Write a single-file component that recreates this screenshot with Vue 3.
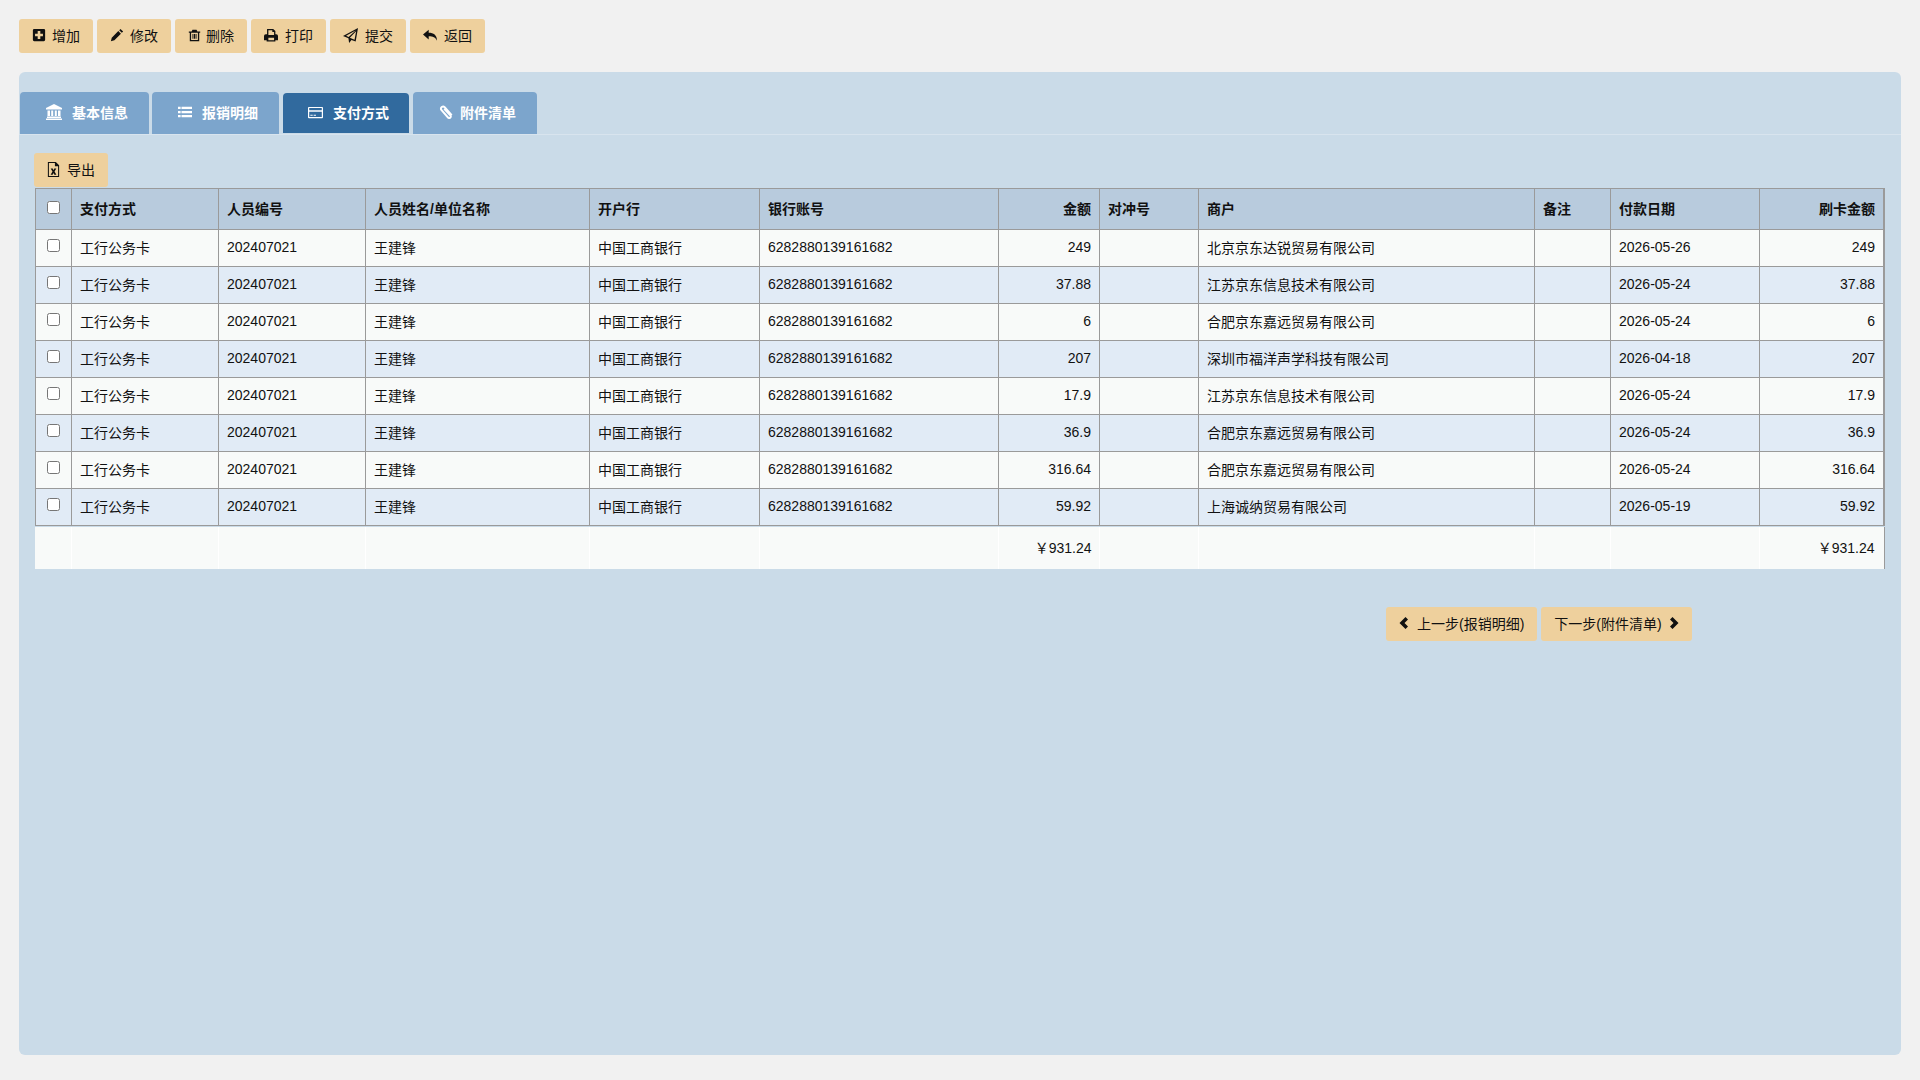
<template>
  <div class="page">
    <div class="toolbar">
      <button v-for="b in tools" :key="b.t" class="btn"><svg class="ic" :style="{ width: b.w + 'px', height: b.w + 'px', marginRight: b.g + 'px' }" viewBox="0 0 16 16" v-html="icons[b.i]"></svg>{{ b.t }}</button>
    </div>
    <div class="panel">
      <div class="tabs">
        <div v-for="t in tabs" :key="t.t" class="tab" :class="{ active: t.a }"><svg class="tic" :style="{ width: t.w + 'px', height: t.w + 'px', marginRight: t.g + 'px' }" viewBox="0 0 16 16" v-html="icons[t.i]"></svg>{{ t.t }}</div>
      </div>
      <div class="content">
        <button class="btn export"><svg class="ic ex" viewBox="0 0 16 16" v-html="icons.excel"></svg>导出</button>
        <div class="grid-wrap">
          <table class="grid">
            <colgroup><col v-for="(w, i) in cols" :key="i" :style="{ width: w + 'px' }" /></colgroup>
            <thead>
              <tr>
                <th class="c"><input type="checkbox" /></th>
                <th>支付方式</th><th>人员编号</th><th>人员姓名/单位名称</th><th>开户行</th><th>银行账号</th>
                <th class="r">金额</th><th>对冲号</th><th>商户</th><th>备注</th><th>付款日期</th><th class="r">刷卡金额</th>
              </tr>
            </thead>
            <tbody>
              <tr v-for="(r, i) in rows" :key="i" :class="{ even: i % 2 }">
                <td class="c"><input type="checkbox" /></td>
                <td>工行公务卡</td><td>202407021</td><td>王建锋</td><td>中国工商银行</td><td>6282880139161682</td>
                <td class="r">{{ r[0] }}</td><td></td><td>{{ r[1] }}</td><td></td><td>{{ r[2] }}</td><td class="r">{{ r[0] }}</td>
              </tr>
            </tbody>
          </table>
        </div>
        <table class="foot">
          <colgroup><col v-for="(w, i) in footCols" :key="i" :style="{ width: w + 'px' }" /></colgroup>
          <tbody>
            <tr><td></td><td></td><td></td><td></td><td></td><td></td><td class="r">￥931.24</td><td></td><td></td><td></td><td></td><td class="r">￥931.24</td></tr>
          </tbody>
        </table>
        <div class="steps">
          <button class="btn"><svg class="chev before" viewBox="0 0 10 14"><path d="M6.500 1L9 3.500 5.500 7 9 10.500 6.500 13 .5 7z" /></svg>上一步(报销明细)</button>
          <button class="btn">下一步(附件清单)<svg class="chev after" viewBox="0 0 10 14"><path d="M3.500 1L1 3.500 4.500 7 1 10.500 3.500 13 9.500 7z" /></svg></button>
        </div>
      </div>
    </div>
  </div>
</template>

<script setup>
const icons = {
  plus: '<path fill-rule="evenodd" d="M2.500 1h11A1.500 1.500 0 0 1 15 2.500v11a1.500 1.500 0 0 1-1.500 1.500h-11A1.500 1.500 0 0 1 1 13.500v-11A1.500 1.500 0 0 1 2.500 1zM6.500 3.500v3h-3v3h3v3h3v-3h3v-3h-3v-3z"/>',
  pencil: '<path d="M12 1l3 3-1.500 1.500-3-3zM9.500 3.500l3 3L5 14l-4 1 1-4z"/>',
  trash: '<path fill-rule="evenodd" d="M5.500 1h5l1 2H15v1.600h-1.200V15H2.200V4.600H1V3h3.500zM3.800 4.600v8.800h8.400V4.600zM5.500 6h1.200v6H5.500zM7.400 6h1.200v6H7.400zM9.300 6h1.200v6H9.300z"/>',
  print: '<path fill-rule="evenodd" d="M3.500 1h7L13 3.500V7h1a2 2 0 0 1 2 2v5h-3v1.500H3V14H0V9a2 2 0 0 1 2-2h1.500zM5 2.500V8h6.500V4.500H9.500v-2zM5 11v3h6.500v-3z"/>',
  send: '<path fill-rule="evenodd" d="M16 0L13.500 14.500 9 12.700 6.500 16 5.800 11 0 8.500zM13.500 2.700L3.300 8.300 6 9.500zM14 3.500L7.300 10.500 12.300 12.500z"/>',
  reply: '<path d="M6.500 2v3.500C12 5.500 16 8 16 14.500c-1.800-4-4.500-5-9.500-5V13L0 7.500z"/>',
  bank: '<path d="M8 0l8 4v1.500H0V4zM1.500 6.500h2.500V12H1.500zM5.200 6.500h2v5.500h-2zM8.800 6.500h2v5.500h-2zM12 6.500h2.500V12H12zM1 12.500h14V14H1zM0 14.500h16V16H0z"/>',
  list: '<path d="M0 2h3v2.500H0zM4 2h12v2.500H4zM0 6.800h3v2.500H0zM4 6.800h12v2.500H4zM0 11.500h3V14H0zM4 11.500h12V14H4z"/>',
  card: '<path fill-rule="evenodd" d="M1 2h14a1 1 0 0 1 1 1v10a1 1 0 0 1-1 1H1a1 1 0 0 1-1-1V3a1 1 0 0 1 1-1zM1.300 3.300v2.200h13.400V3.300zM1.300 7.300v5.400h13.400V7.300zM2.500 10.500H5v1H2.500zM6 10.500h2.500v1H6z"/>',
  clip: '<path fill="none" stroke="currentColor" stroke-width="2.200" stroke-linecap="round" d="M14 11L6.500 2.500a2.500 2.500 0 0 0-3.800 3.200L10.500 14.500a1.800 1.800 0 0 0 2.700-2.300L6.500 5"/>',
  excel: '<path fill-rule="evenodd" d="M2 0h8.500L14 3.500V16H2zM3.100 1.100v13.800h9.800V4.500H9.500V1.100z"/><path d="M5 7h2.200l.8 1.700L8.800 7H11L9.100 10.200l2 3.300H8.900L8 11.800l-.9 1.700H4.900l2-3.300z"/>',
}
const tools = [
  { t: '增加', i: 'plus', w: 14, g: 6 }, { t: '修改', i: 'pencil', w: 14, g: 6 }, { t: '删除', i: 'trash', w: 13, g: 5 },
  { t: '打印', i: 'print', w: 14, g: 7 }, { t: '提交', i: 'send', w: 15, g: 7 }, { t: '返回', i: 'reply', w: 14, g: 7 },
]
const tabs = [
  { t: '基本信息', i: 'bank', w: 16, g: 10 }, { t: '报销明细', i: 'list', w: 14, g: 10 },
  { t: '支付方式', i: 'card', w: 15, g: 10, a: true }, { t: '附件清单', i: 'clip', w: 14, g: 7 },
]
const cols = [36, 147, 147, 224, 170, 239, 101, 99, 336, 76, 149, 124]
const footCols = [36, 147, 147, 224, 170, 239, 101, 99, 336, 76, 149, 125]
const rows = [
  ['249', '北京京东达锐贸易有限公司', '2026-05-26'],
  ['37.88', '江苏京东信息技术有限公司', '2026-05-24'],
  ['6', '合肥京东嘉远贸易有限公司', '2026-05-24'],
  ['207', '深圳市福洋声学科技有限公司', '2026-04-18'],
  ['17.9', '江苏京东信息技术有限公司', '2026-05-24'],
  ['36.9', '合肥京东嘉远贸易有限公司', '2026-05-24'],
  ['316.64', '合肥京东嘉远贸易有限公司', '2026-05-24'],
  ['59.92', '上海诚纳贸易有限公司', '2026-05-19'],
]
</script>

<style>
html, body { margin: 0; background: #f1f1f1; }
</style>

<style scoped>
.page {
  height: 1080px;
  box-sizing: border-box;
  padding: 19px 19px 25px;
  display: flex;
  flex-direction: column;
  font-family: "Liberation Sans", "Noto Sans CJK SC", sans-serif;
  font-size: 14px;
  color: #111;
}
.toolbar { display: flex; gap: 4px; height: 34px; margin-bottom: 19px; }
.btn {
  height: 34px;
  padding: 0 13px 2px;
  border: 0;
  border-radius: 3px;
  background: #eed09d;
  font: inherit;
  color: #111;
  display: inline-flex;
  align-items: center;
}
.ic { fill: #111; color: #111; flex: none; }
.ic.ex { width: 15px; height: 15px; margin-right: 6px; margin-left: -1px; }
.chev { width: 10px; height: 14px; fill: #111; flex: none; }
.chev.before { margin-right: 8px; }
.chev.after { margin-left: 7px; }
.panel {
  flex: 1;
  background: #cadbe8;
  border-radius: 6px;
  padding-top: 20px;
}
.tabs {
  display: flex;
  height: 42px;
  padding-left: 1px;
  gap: 3px;
  border-bottom: 1px solid #d8e4ee;
}
.tab {
  height: 42px;
  box-sizing: border-box;
  padding: 0 21px 2px 26px;
  border-radius: 4px 4px 0 0;
  background: #7ca5cc;
  color: #fff;
  font-weight: 700;
  display: flex;
  align-items: center;
}
.tab.active {
  background: #316a9e;
  height: 40px;
  margin: 1px 1px 0;
  padding: 0 20px 2px 25px;
}
.tic { fill: #fff; color: #fff; flex: none; }
.content { padding: 18px 16px 0; }
.export { display: flex; margin-left: -1px; }
.grid-wrap {
  width: 1850px;
  box-sizing: border-box;
  margin-top: 1px;
  border-top: 1px solid #9a9a9a;
  border-right: 1px solid #9a9a9a;
  background: #dde7ef;
}
.grid, .foot {
  border-collapse: collapse;
  table-layout: fixed;
}
.grid { width: 1848px; margin-top: -1px; }
.foot { width: 1849px; }
.grid th, .grid td {
  border: 1px solid #9a9a9a;
  padding: 0 8px 2px;
  text-align: left;
  overflow: hidden;
  white-space: nowrap;
}
.grid th { height: 38px; background: #b8cbdd; font-weight: 700; }
.grid td { height: 34px; background: #f8faf9; }
.grid .even td { background: #e1ebf6; }
.grid .r, .foot .r { text-align: right; }
.grid .c { text-align: center; padding: 0; }
.grid input { margin: 0; width: 13px; height: 13px; position: relative; top: -1px; }
.grid th input { top: 0; }
.foot { margin-top: 1px; background: #f8faf9; }
.foot td { height: 42px; padding: 0 7px 2px 8px; box-sizing: border-box; border-right: 1px solid #fff; }
.foot td:last-child { border-right: 1px solid #9a9a9a; padding-right: 9px; }
.steps { display: flex; gap: 4px; margin: 38px 0 0 1351px; }
</style>
